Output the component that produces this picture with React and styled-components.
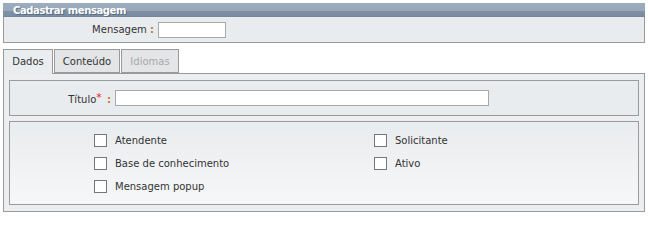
import React, { useState } from 'react'
import styled, { createGlobalStyle } from 'styled-components'

const Global = createGlobalStyle`
  body {
    margin: 0;
    background: #fff;
    font-family: "DejaVu Sans", Verdana, sans-serif;
    font-size: 10px;
    color: #333;
  }
`

const Page = styled.div`
  padding: 3px 3px 0 3px;
  width: 642px;
`

const Panel = styled.section`
  display: flex;
  flex-direction: column;
`

const PanelHeader = styled.div`
  height: 13px;
  line-height: 13px;
  padding: 1px 0 0 10px;
  background: linear-gradient(#9dadbf 0%, #97a8ba 55%, #7d90a6 60%, #7a8da3 92%, #6f8299 100%);
  color: #fff;
  font-weight: bold;
  font-size: 10px;
  letter-spacing: -0.4px;
  text-shadow: 1px 1px 0 #5a6b80;
`

const PanelBody = styled.div`
  height: 25px;
  display: flex;
  align-items: center;
  background: #e9ecee;
  border: 1px solid #9a9a9a;
  border-top: none;
`

const Label = styled.label`
  width: ${p => p.$width}px;
  text-align: right;
  padding-right: 4px;
  color: #333;
  font-size: 10px;
  white-space: nowrap;
`

const Colon = styled.span`
  color: #c07a2c;
  font-weight: bold;
`

const Star = styled.span`
  color: #e8194a;
  font-size: 11px;
  vertical-align: 2px;
  margin-right: 2px;
`

const TextInput = styled.input`
  box-sizing: border-box;
  width: ${p => p.$width}px;
  height: 16px;
  border: 1px solid #a9a9a9;
  background: #fff;
  padding: 0 2px;
  font: inherit;
  outline: none;
`

const Tabs = styled.div`
  margin-top: 5px;
`

const TabList = styled.div`
  display: flex;
  align-items: flex-end;
  gap: 1px;
  height: 25px;
`

const Tab = styled.button`
  box-sizing: border-box;
  height: ${p => (p.$active ? 25 : 24)}px;
  width: ${p => p.$width}px;
  margin-bottom: ${p => (p.$active ? -1 : 0)}px;
  border: 1px solid #9a9a9a;
  border-bottom: ${p => (p.$active ? 'none' : '1px solid #9a9a9a')};
  background: ${p => (p.$active ? '#eaedef' : '#e4e5e6')};
  color: ${p => (p.$disabled ? '#a8a8a8' : '#333')};
  font: inherit;
  font-size: 10px;
  padding: 0;
  padding-bottom: ${p => (p.$active ? 1 : 0)}px;
  cursor: ${p => (p.$disabled ? 'default' : 'pointer')};
  position: relative;
  z-index: ${p => (p.$active ? 1 : 0)};
`

const TabPanel = styled.div`
  box-sizing: border-box;
  border: 1px solid #9a9a9a;
  background: #eceef0;
  padding: 6px 5px 6px 5px;
  display: flex;
  flex-direction: column;
  gap: 5px;
`

const Fieldset = styled.div`
  border: 1px solid #9a9a9a;
  background: ${p => (p.$gradient ? 'linear-gradient(#e9ecee, #f6f7f8)' : '#e9ecee')};
  padding: ${p => p.$pad};
`

const Row = styled.div`
  display: flex;
  align-items: center;
`

const CheckGrid = styled.div`
  display: grid;
  grid-template-columns: 280px 200px;
  row-gap: 10px;
  padding-left: 84px;
`

const CheckItem = styled.label`
  display: flex;
  align-items: center;
  gap: 8px;
  height: 13px;
  cursor: pointer;
`

const Box = styled.span`
  box-sizing: border-box;
  width: 13px;
  height: 13px;
  border: 1px solid #777;
  background: #fff;
  display: flex;
  align-items: center;
  justify-content: center;
  font-size: 10px;
  line-height: 1;
`

function Check({ label }) {
  const [on, setOn] = useState(false)
  return (
    <CheckItem onClick={() => setOn(!on)}>
      <Box>{on ? '✓' : ''}</Box>
      {label}
    </CheckItem>
  )
}

export default function App() {
  const [tab, setTab] = useState('dados')
  return (
    <Page>
      <Global />
      <Panel>
        <PanelHeader>Cadastrar mensagem</PanelHeader>
        <PanelBody>
          <Label $width={150}>Mensagem <Colon>:</Colon></Label>
          <TextInput $width={68} />
        </PanelBody>
      </Panel>
      <Tabs>
        <TabList>
          <Tab $width={50} $active={tab === 'dados'} onClick={() => setTab('dados')}>Dados</Tab>
          <Tab $width={66} $active={tab === 'conteudo'} onClick={() => setTab('conteudo')}>Conteúdo</Tab>
          <Tab $width={58} $disabled>Idiomas</Tab>
        </TabList>
        <TabPanel>
          <Fieldset $pad="9px 0 9px 0">
            <Row>
              <Label $width={101}>Título<Star>*</Star> <Colon>:</Colon></Label>
              <TextInput $width={374} />
            </Row>
          </Fieldset>
          <Fieldset $gradient $pad="12px 0 11px 0">
            <CheckGrid>
              <Check label="Atendente" />
              <Check label="Solicitante" />
              <Check label="Base de conhecimento" />
              <Check label="Ativo" />
              <Check label="Mensagem popup" />
            </CheckGrid>
          </Fieldset>
        </TabPanel>
      </Tabs>
    </Page>
  )
}
